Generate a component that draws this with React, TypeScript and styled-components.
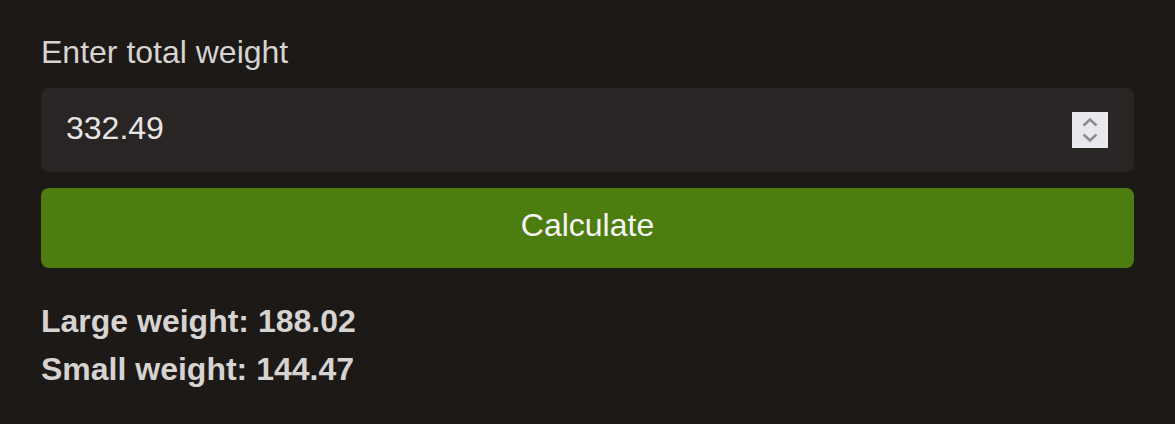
import React from "react";
import styled, { createGlobalStyle } from "styled-components";

const Global = createGlobalStyle`
  html, body { margin: 0; padding: 0; background: #1c1917; }
  body { font-family: "Liberation Sans", Arial, sans-serif; }
`;

const Page = styled.div`
  width: 1175px;
  height: 424px;
  box-sizing: border-box;
  padding: 28px 41px 0 41px;
  background: #1c1917;
  display: flex;
  flex-direction: column;
`;

const Label = styled.label`
  font-size: 32px;
  line-height: 48px;
  color: #d6d3d1;
`;

const Field = styled.div`
  margin-top: 12px;
  height: 84px;
  border-radius: 8px;
  background: #292524;
  display: flex;
  align-items: center;
  justify-content: space-between;
  padding: 0 26px 0 25px;
`;

const Value = styled.span`
  font-size: 32px;
  line-height: 48px;
  color: #e7e5e4;
  margin-top: -5px;
`;

const Spinner = styled.div`
  width: 36px;
  height: 36px;
  background: #e9e9ed;
  display: flex;
  align-items: center;
  justify-content: center;
`;

const Button = styled.button`
  margin-top: 16px;
  height: 80px;
  border: none;
  border-radius: 8px;
  background: #4d7c0f;
  color: #f5f5f4;
  font-family: "Liberation Sans", Arial, sans-serif;
  font-size: 32px;
  line-height: 48px;
  padding: 0 0 6px 0;
  cursor: pointer;
`;

const Results = styled.div`
  margin-top: 29px;
  display: flex;
  flex-direction: column;
`;

const Result = styled.div`
  font-size: 32px;
  line-height: 48px;
  font-weight: 700;
  color: #d6d3d1;
`;

export default function App() {
  return (
    <Page>
      <Global />
      <Label>Enter total weight</Label>
      <Field>
        <Value>332.49</Value>
        <Spinner>
          <svg width="36" height="36" viewBox="0 0 36 36" fill="none">
            <path d="M11.5 13.5 L18 7.5 L24.5 13.5" stroke="#8b8a98" strokeWidth="2.5" />
            <path d="M11.5 22.5 L18 28.5 L24.5 22.5" stroke="#8b8a98" strokeWidth="2.5" />
          </svg>
        </Spinner>
      </Field>
      <Button>Calculate</Button>
      <Results>
        <Result>Large weight: 188.02</Result>
        <Result>Small weight: 144.47</Result>
      </Results>
    </Page>
  );
}
